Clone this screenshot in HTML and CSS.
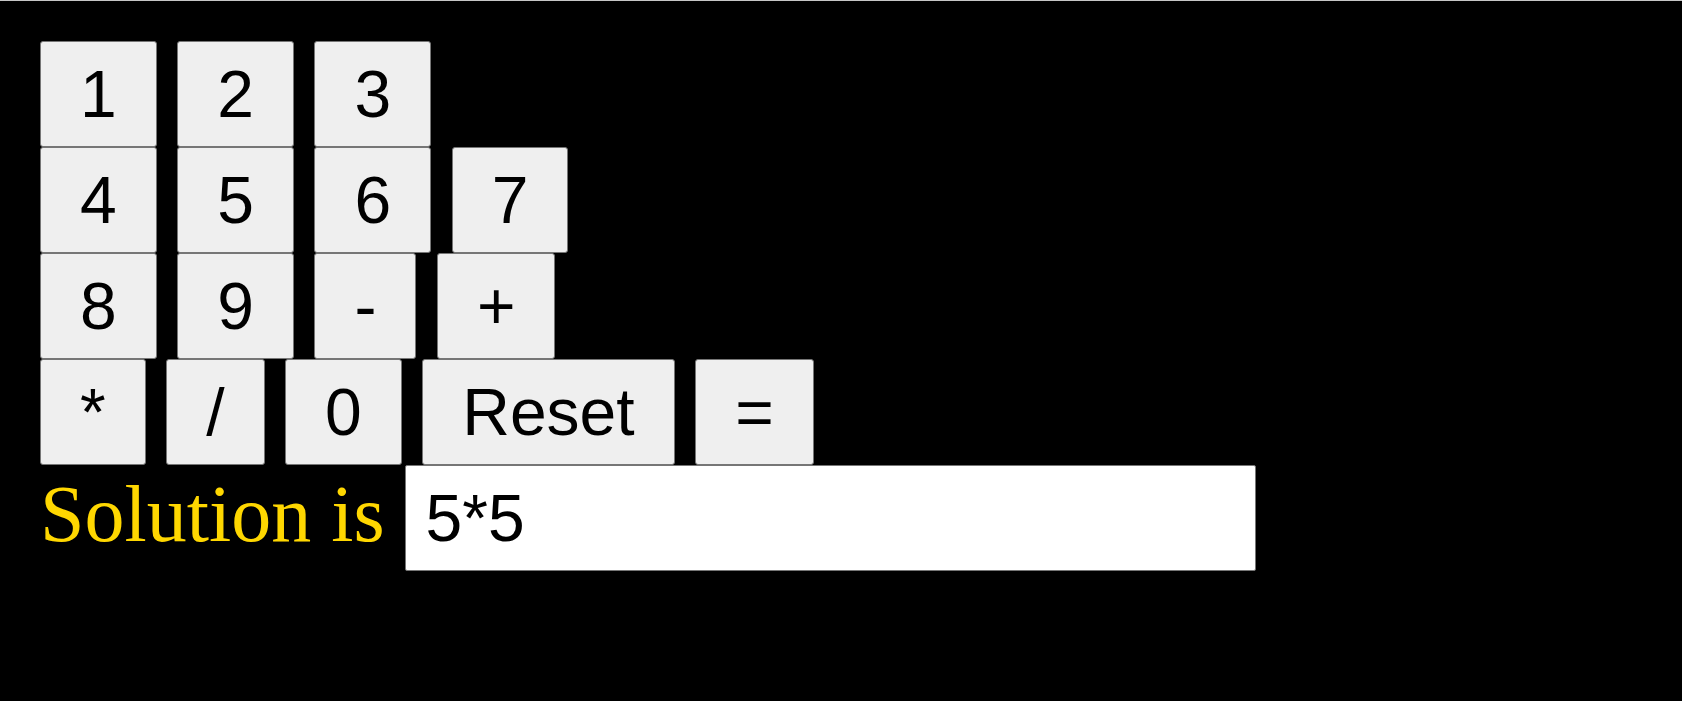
FILE: index.html
```html
<!DOCTYPE html>
<html lang="en">
<head>
  <meta charset="UTF-8">
  <meta name="viewport" content="width=device-width, initial-scale=1.0">
  <title>Calculator</title>
  <link rel="stylesheet" href="styles.css">
</head>
<body>
  <div class="calc">
    <div class="row">
      <button class="key">1</button>
      <button class="key">2</button>
      <button class="key">3</button>
    </div>
    <div class="row">
      <button class="key">4</button>
      <button class="key">5</button>
      <button class="key">6</button>
      <button class="key">7</button>
    </div>
    <div class="row">
      <button class="key">8</button>
      <button class="key">9</button>
      <button class="key">-</button>
      <button class="key">+</button>
    </div>
    <div class="row">
      <button class="key">*</button>
      <button class="key">/</button>
      <button class="key">0</button>
      <button class="key">Reset</button>
      <button class="key">=</button>
    </div>
    <div class="result">
      <span class="label">Solution is</span>
      <input class="screen" type="text" value="5*5">
    </div>
  </div>
</body>
</html>
```

FILE: styles.css
```css
body {
  margin: 0;
  padding: 40px;
  background-color: #000;
  border-top: 1px solid #c6c6c6;
  font-family: 'Liberation Serif', serif;
  font-size: 80px;
}
.calc {
  display: flex;
  flex-direction: column;
  align-items: flex-start;
}
.row {
  display: flex;
  gap: 20.5px;
}
.key {
  font-family: 'Liberation Sans', Arial, sans-serif;
  font-size: 66px;
  line-height: 76px;
  padding: 14px 39px;
  background-color: #efefef;
  color: #000;
  border: 1px solid #767676;
  border-radius: 3px;
  cursor: pointer;
}
.result {
  display: flex;
  align-items: baseline;
  gap: 20px;
}
.label {
  color: #ffd700;
  line-height: normal;
}
.screen {
  box-sizing: border-box;
  width: 851px;
  font-family: 'Liberation Sans', Arial, sans-serif;
  font-size: 66px;
  line-height: 76px;
  padding: 14px 20px;
  background-color: #fff;
  color: #000;
  border: 1px solid #767676;
  border-radius: 2px;
}
```
